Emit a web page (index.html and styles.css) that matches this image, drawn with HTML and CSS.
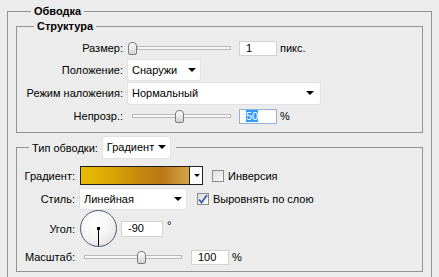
FILE: index.html
```html
<!DOCTYPE html>
<html lang="ru">
<head>
    <meta charset="UTF-8">
    <title>Обводка</title>
    <link rel="stylesheet" href="styles.css">
</head>
<body>
    <fieldset class="group outer">
        <legend class="title outer-title">Обводка</legend>

        <fieldset class="group structure">
            <legend class="title structure-title">Структура</legend>

            <div class="row">
                <span class="lbl">Размер:</span>
                <div class="slider size-slider"><span class="track"></span><span class="thumb" style="left:0px"></span></div>
                <span class="field size-field">1</span>
                <span class="unit">пикс.</span>
            </div>

            <div class="row">
                <span class="lbl">Положение:</span>
                <div class="select pos-select">Снаружи<span class="arrow"></span></div>
            </div>

            <div class="row tall">
                <span class="lbl">Режим наложения:</span>
                <div class="select mode-select">Нормальный<span class="arrow"></span></div>
            </div>

            <div class="row">
                <span class="lbl">Непрозр.:</span>
                <div class="slider opacity-slider"><span class="track"></span><span class="thumb" style="left:47px"></span></div>
                <span class="field size-field focused"><span class="selected">50</span></span>
                <span class="unit">%</span>
            </div>
        </fieldset>

        <fieldset class="group stroke">
            <legend class="stroke-title">
                <span>Тип обводки:</span>
                <div class="select type-select">Градиент<span class="arrow"></span></div>
            </legend>

            <div class="row2">
                <span class="lbl2">Градиент:</span>
                <div class="gradient-box">
                    <span class="gradient"></span>
                    <span class="gradient-btn"><span class="arrow"></span></span>
                </div>
                <span class="check invert-check"></span>
                <span class="check-text">Инверсия</span>
            </div>

            <div class="row2">
                <span class="lbl2">Стиль:</span>
                <div class="select style-select">Линейная<span class="arrow"></span></div>
                <span class="check align-check">
                    <svg width="10" height="10" viewBox="0 0 10 10"><path d="M1 5.5 L3.5 8.5 L9 1" fill="none" stroke="#3c5ca8" stroke-width="1.8"/></svg>
                </span>
                <span class="check-text">Выровнять по слою</span>
            </div>

            <div class="row2 dial-row">
                <span class="lbl2">Угол:</span>
                <div class="dial"><span class="dial-line"></span><span class="dial-dot"></span></div>
                <span class="field angle-field">-90</span>
                <span class="degree">°</span>
            </div>

            <div class="row2 scale-row">
                <span class="lbl2">Масштаб:</span>
                <div class="slider scale-slider"><span class="track"></span><span class="thumb" style="left:57px"></span></div>
                <span class="field scale-field">100</span>
                <span class="unit">%</span>
            </div>
        </fieldset>
    </fieldset>
</body>
</html>
```

FILE: styles.css
```css
body {
    margin: 0;
    padding: 5px 7px 0 7px;
    background-color: #ececec;
    font-family: "Liberation Sans", Arial, sans-serif;
    font-size: 11px;
    color: #000;
    overflow: hidden;
}
.group {
    margin: 0;
    padding: 0;
    border: 1px solid #939393;
    min-width: 0;
}
.title {
    font-weight: bold;
    padding: 0 3px;
    line-height: 13px;
}
.outer {
    padding: 0 8px 30px;
}
.outer-title {
    margin-left: 15px;
}
.structure {
    margin-top: 2px;
    padding: 4px 0 5px;
}
.structure-title {
    margin-left: 17px;
}
.row {
    display: flex;
    align-items: center;
    height: 22px;
}
.row.tall {
    height: 24px;
}
.lbl {
    flex: none;
    width: 106px;
    margin-right: 5px;
    text-align: right;
}
.slider {
    position: relative;
    flex: none;
    height: 14px;
}
.slider .track {
    position: absolute;
    left: 0;
    right: 0;
    top: 5px;
    height: 2px;
    border: 1px solid #b8b8b8;
    background-color: #f6f6f6;
}
.slider .thumb {
    position: absolute;
    top: 1px;
    width: 7px;
    height: 11px;
    border: 1px solid #7c7c7c;
    border-radius: 4px 4px 2px 2px;
    background: linear-gradient(#ffffff, #d2d2d2);
}
.size-slider {
    width: 103px;
}
.size-slider .track {
    left: 9px;
}
.opacity-slider {
    width: 103px;
}
.opacity-slider .track {
    left: 4px;
}
.field {
    flex: none;
    box-sizing: border-box;
    height: 15px;
    line-height: 13px;
    padding-left: 6px;
    background-color: #fff;
    border: 1px solid #d2d2d2;
}
.size-field {
    width: 38px;
    margin-left: 8px;
}
.focused {
    border-color: #8fb2d8;
}
.selected {
    background-color: #3399ff;
    color: #fff;
}
.unit {
    margin-left: 3px;
}
.select {
    position: relative;
    flex: none;
    box-sizing: border-box;
    height: 20px;
    line-height: 20px;
    padding-left: 4px;
    background-color: #fff;
    border-radius: 2px;
    box-shadow: 0 0 0 1px #e2e2e2;
}
.arrow {
    position: absolute;
    right: 4px;
    top: 8px;
    width: 0;
    height: 0;
    border-left: 4px solid transparent;
    border-right: 4px solid transparent;
    border-top: 4px solid #000;
}
.pos-select {
    width: 72px;
}
.mode-select {
    width: 192px;
    height: 21px;
}
.mode-select .arrow {
    right: 6px;
}
.stroke {
    margin-top: 4px;
    padding: 6px 0 4px;
}
.stroke-title {
    display: flex;
    align-items: center;
    margin-left: 12px;
    padding: 0 6px 0 3px;
}
.type-select {
    width: 67px;
    height: 21px;
    line-height: 21px;
    margin-left: 5px;
}
.row2 {
    display: flex;
    align-items: center;
    height: 23px;
}
.dial-row {
    height: 37px;
}
.scale-row {
    height: 20px;
}
.lbl2 {
    flex: none;
    width: 58px;
    margin-right: 5px;
    text-align: right;
}
.gradient-box {
    flex: none;
    display: flex;
    box-sizing: border-box;
    width: 123px;
    height: 19px;
    border: 1px solid #1e1e1e;
}
.gradient {
    flex: 1;
    background: linear-gradient(to right, #e9bd00 0%, #d8a404 30%, #c6870e 55%, #b97816 75%, #d5a64c 100%);
}
.gradient-btn {
    position: relative;
    width: 12px;
    border-left: 1px solid #1e1e1e;
    background-color: #fff;
}
.gradient-btn .arrow {
    right: 2px;
    top: 7px;
    border-left-width: 3px;
    border-right-width: 3px;
    border-top-width: 3px;
}
.check {
    flex: none;
    display: flex;
    align-items: center;
    justify-content: center;
    box-sizing: border-box;
    width: 12px;
    height: 12px;
    border: 1px solid #8c8c8c;
    background: linear-gradient(135deg, #dcdcdc, #fbfbfb);
}
.invert-check {
    margin-left: 9px;
}
.align-check {
    margin-left: 11px;
}
.check-text {
    margin-left: 4px;
}
.style-select {
    width: 106px;
}
.dial {
    position: relative;
    flex: none;
    box-sizing: border-box;
    width: 37px;
    height: 37px;
    border: 1px solid #4d5c7c;
    border-radius: 50%;
    background: radial-gradient(circle at 40% 35%, #ffffff 0%, #f4f4f4 50%, #d6d6d6 100%);
}
.dial-dot {
    position: absolute;
    left: 16px;
    top: 16px;
    width: 3px;
    height: 3px;
    background-color: #000;
}
.dial-line {
    position: absolute;
    left: 17px;
    top: 17px;
    width: 1px;
    height: 18px;
    background-color: #000;
}
.angle-field {
    width: 42px;
    height: 16px;
    margin-left: 4px;
}
.degree {
    align-self: flex-start;
    margin-top: 9px;
    margin-left: 4px;
}
.scale-slider {
    width: 106px;
}
.scale-slider .track {
    left: 4px;
    right: 4px;
}
.scale-field {
    width: 38px;
    margin-left: 5px;
}
```
